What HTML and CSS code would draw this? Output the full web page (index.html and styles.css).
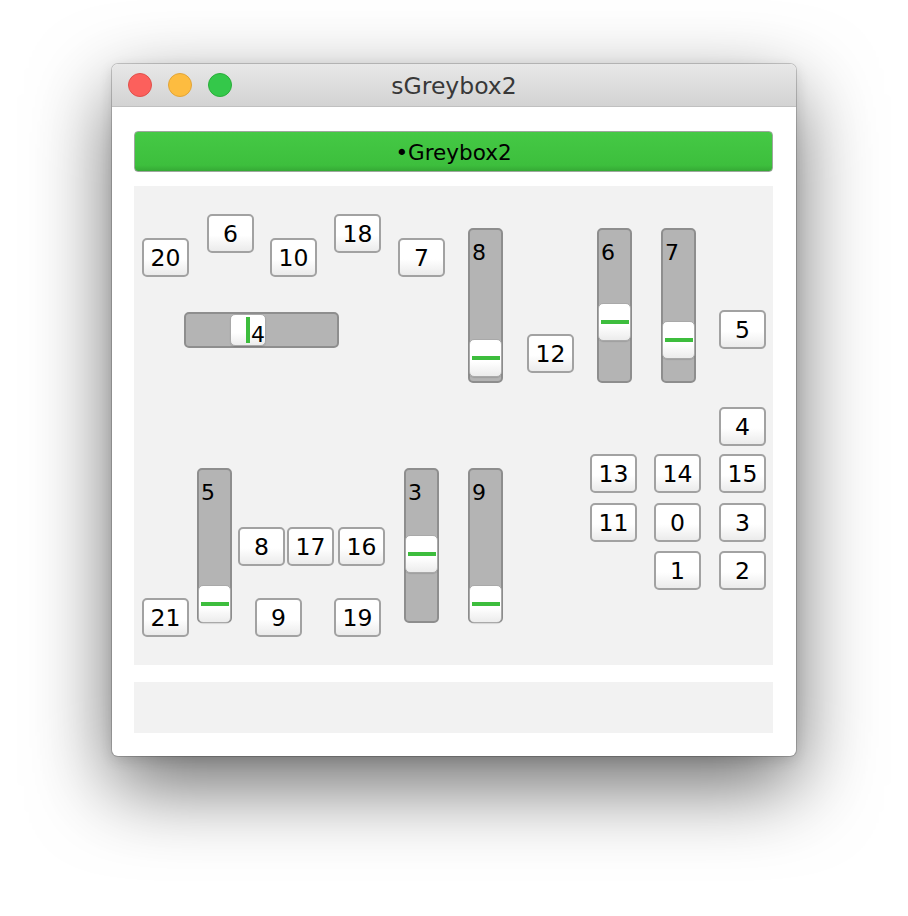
FILE: index.html
```html
<!DOCTYPE html>
<html>
<head>
<meta charset="utf-8">
<title>sGreybox2</title>
<link rel="stylesheet" href="styles.css">
</head>
<body>
<div class="window">
  <div class="titlebar">
    <div class="lights">
      <span class="light red"></span>
      <span class="light yellow"></span>
      <span class="light green"></span>
    </div>
    <div class="title">sGreybox2</div>
    <div></div>
  </div>
  <div class="content">
    <div class="greenbar">•Greybox2</div>
    <div class="canvas">
      <div class="btn p20">20</div>
      <div class="btn p6">6</div>
      <div class="btn p10">10</div>
      <div class="btn p18">18</div>
      <div class="btn p7">7</div>

      <div class="hslider s4">
        <div class="hthumb"><span class="vmark"></span></div>
        <span class="hlabel">4</span>
      </div>

      <div class="vslider s8">
        <span class="vlabel">8</span>
        <div class="vthumb t8"><span class="hmark"></span></div>
      </div>
      <div class="btn p12">12</div>
      <div class="vslider s6">
        <span class="vlabel">6</span>
        <div class="vthumb t6"><span class="hmark"></span></div>
      </div>
      <div class="vslider s7">
        <span class="vlabel">7</span>
        <div class="vthumb t7"><span class="hmark"></span></div>
      </div>
      <div class="btn p5">5</div>

      <div class="btn g4">4</div>
      <div class="btn g13">13</div>
      <div class="btn g14">14</div>
      <div class="btn g15">15</div>
      <div class="btn g11">11</div>
      <div class="btn g0">0</div>
      <div class="btn g3">3</div>
      <div class="btn g1">1</div>
      <div class="btn g2">2</div>

      <div class="vslider s5">
        <span class="vlabel">5</span>
        <div class="vthumb t5"><span class="hmark"></span></div>
      </div>
      <div class="btn p21">21</div>
      <div class="btn q8">8</div>
      <div class="btn p17">17</div>
      <div class="btn p16">16</div>
      <div class="btn q9">9</div>
      <div class="btn p19">19</div>
      <div class="vslider s3">
        <span class="vlabel">3</span>
        <div class="vthumb t3"><span class="hmark"></span></div>
      </div>
      <div class="vslider s9">
        <span class="vlabel">9</span>
        <div class="vthumb t9"><span class="hmark"></span></div>
      </div>
    </div>
    <div class="footer"></div>
  </div>
</div>
</body>
</html>
```

FILE: styles.css
```css
html, body {
  margin: 0;
  padding: 0;
  background: #ffffff;
}

body {
  font-family: "DejaVu Sans", "Liberation Sans", sans-serif;
  width: 908px;
  height: 916px;
  overflow: hidden;
}

.window {
  margin: 64px 0 0 112px;
  width: 684px;
  height: 692px;
  box-sizing: border-box;
  background: #ffffff;
  border-radius: 6px;
  overflow: hidden;
  display: flex;
  flex-direction: column;
  box-shadow:
    0 0 0 1px rgba(0, 0, 0, 0.18),
    0 30px 80px rgba(0, 0, 0, 0.58),
    0 4px 14px rgba(0, 0, 0, 0.12);
}

.titlebar {
  height: 43px;
  box-sizing: border-box;
  background: linear-gradient(#e8e8e8, #d3d3d3);
  border-bottom: 1px solid #c0c0c0;
  display: grid;
  grid-template-columns: 1fr auto 1fr;
  align-items: center;
  flex: none;
}

.lights {
  display: flex;
  gap: 16px;
  padding-left: 16px;
}

.light {
  width: 24px;
  height: 24px;
  border-radius: 50%;
  box-sizing: border-box;
}

.red { background: #fc605c; border: 1px solid #e0504b; }
.yellow { background: #fdbc40; border: 1px solid #e2a538; }
.green { background: #34c84a; border: 1px solid #2aae3a; }

.title {
  font-size: 23.5px;
  color: #383838;
  padding-top: 4px;
  line-height: 1;
}

.content {
  flex: 1;
  display: flex;
  flex-direction: column;
  padding: 24px 23px 23px 22px;
}

.greenbar {
  height: 41px;
  box-sizing: border-box;
  border: 1px solid #9ea79e;
  border-radius: 4px;
  background: linear-gradient(#45c945, #3dbf3d 85%, #35a935);
  font-size: 21.5px;
  color: #000;
  display: flex;
  align-items: center;
  justify-content: center;
  padding-top: 2px;
}

.canvas {
  position: relative;
  margin-top: 14px;
  height: 479px;
  background: #f2f2f2;
}

.footer {
  margin-top: 17px;
  height: 51px;
  background: #f2f2f2;
}

/* buttons */
.btn {
  position: absolute;
  width: 47px;
  height: 39px;
  box-sizing: border-box;
  border: 2px solid #a2a2a2;
  border-radius: 5px;
  background: linear-gradient(#ffffff 0%, #ffffff 55%, #ebebeb 100%);
  font-size: 23.5px;
  color: #000;
  display: flex;
  align-items: center;
  justify-content: center;
  padding-top: 1px;
}

.p20 { left: 8px; top: 52px; }
.p6 { left: 73px; top: 28px; }
.p10 { left: 136px; top: 52px; }
.p18 { left: 200px; top: 28px; }
.p7 { left: 264px; top: 52px; }
.p12 { left: 393px; top: 148px; }
.p5 { left: 585px; top: 124px; }

.g4 { left: 585px; top: 221px; }
.g13 { left: 456px; top: 268px; }
.g14 { left: 520px; top: 268px; }
.g15 { left: 585px; top: 268px; }
.g11 { left: 456px; top: 317px; }
.g0 { left: 520px; top: 317px; }
.g3 { left: 585px; top: 317px; }
.g1 { left: 520px; top: 365px; }
.g2 { left: 585px; top: 365px; }

.p21 { left: 8px; top: 412px; }
.q8 { left: 104px; top: 341px; }
.p17 { left: 153px; top: 341px; }
.p16 { left: 204px; top: 341px; }
.q9 { left: 121px; top: 412px; }
.p19 { left: 200px; top: 412px; }

/* sliders */
.vslider, .hslider {
  position: absolute;
  box-sizing: border-box;
  background: #b4b4b4;
  border: 2px solid #8e8e8e;
  border-radius: 5px;
}

.vslider {
  width: 35px;
  height: 155px;
}

.hslider {
  width: 155px;
  height: 36px;
}

.s4 { left: 50px; top: 126px; }
.s8 { left: 334px; top: 42px; }
.s6 { left: 463px; top: 42px; }
.s7 { left: 527px; top: 42px; }
.s5 { left: 63px; top: 282px; }
.s3 { left: 270px; top: 282px; }
.s9 { left: 334px; top: 282px; }

.vlabel, .hlabel {
  position: absolute;
  font-size: 22px;
  line-height: 25px;
  color: #000;
}

.vlabel {
  left: 2px;
  top: 10px;
}

.hlabel {
  left: 65px;
  top: 8px;
  z-index: 2;
}

.vthumb, .hthumb {
  position: absolute;
  box-sizing: border-box;
  background: linear-gradient(#ffffff 0%, #ffffff 60%, #ececec 100%);
  border: 1px solid #a9a9a9;
  border-radius: 5px;
  box-shadow: 0 1px 1px rgba(0, 0, 0, 0.12);
}

.vthumb {
  left: -1px;
  width: 33px;
  height: 38px;
}

.hthumb {
  left: 44px;
  top: 0;
  width: 36px;
  height: 32px;
}

.t8 { top: 109px; }
.t6 { top: 73px; }
.t7 { top: 91px; }
.t5 { top: 115px; }
.t3 { top: 65px; }
.t9 { top: 115px; }

.hmark {
  position: absolute;
  left: 2px;
  top: 16px;
  width: 28px;
  height: 4px;
  background: #3dbd3d;
}

.vmark {
  position: absolute;
  left: 15px;
  top: 2px;
  width: 4px;
  height: 26px;
  background: #3dbd3d;
}
```
